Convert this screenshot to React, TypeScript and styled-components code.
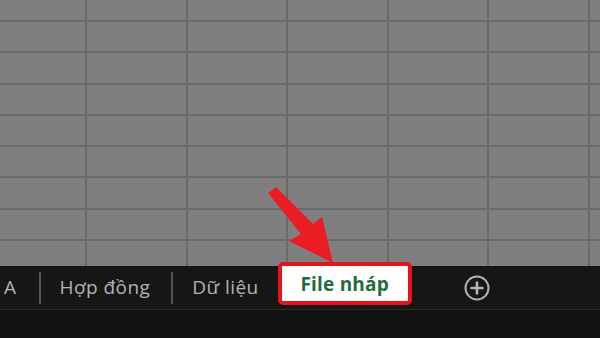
import styled, { createGlobalStyle } from "styled-components";

const GlobalStyle = createGlobalStyle`
  html, body {
    margin: 0;
    padding: 0;
    background: #121212;
  }
  body {
    font-family: "Open Sans", "Noto Sans", sans-serif;
  }
`;

const COLS = 7;
const ROWS = 9;

export default function App() {
  const cells = Array.from({ length: COLS * ROWS });
  return (
    <>
      <GlobalStyle />
      <Screen>
        <Sheet>
          {cells.map((_, i) => (
            <Cell key={i} />
          ))}
        </Sheet>

        <TabBar>
          <Tab $left={4} $right={23}>A</Tab>
          <Divider />
          <Tab $left={18} $right={21}>Hợp đồng</Tab>
          <Divider />
          <Tab $left={19} $right={19}>Dữ liệu</Tab>
          <ActiveTab>File nháp</ActiveTab>
          <AddButton aria-label="Thêm trang tính">
            <svg width="26" height="26" viewBox="0 0 26 26">
              <circle cx="13" cy="13" r="11.5" fill="none" stroke="#b3b3b3" strokeWidth="2" />
              <path d="M13 7.5v11M7.5 13h11" stroke="#b3b3b3" strokeWidth="2.6" strokeLinecap="round" />
            </svg>
          </AddButton>
        </TabBar>
        <StatusStrip />

        <Arrow width="80" height="90" viewBox="0 0 80 90">
          <polygon
            points="5,16 13,10 50,47 59,40 70,86 26,64 38,57"
            fill="#ec1c24"
          />
        </Arrow>
      </Screen>
    </>
  );
}

const Screen = styled.div`
  position: relative;
  width: 600px;
  height: 338px;
  overflow: hidden;
  background: #121212;
`;

const Sheet = styled.div`
  display: grid;
  grid-template-columns: 87px repeat(6, 100.5px);
  grid-template-rows: 22px repeat(8, 31.3px);
  height: 266px;
  overflow: hidden;
  background: #7f7f7f;
`;

const Cell = styled.div`
  border-right: 2px solid #6a6a6a;
  border-bottom: 2px solid #6a6a6a;
`;

const TabBar = styled.div`
  display: flex;
  align-items: center;
  height: 43px;
  background: #161616;
  border-bottom: 1px solid #2a2a2a;
`;

const Tab = styled.div<{ $left: number; $right: number }>`
  padding: 0 ${(p) => p.$right}px 0 ${(p) => p.$left}px;
  font-size: 19px;
  font-weight: 500;
  letter-spacing: 0.45px;
  color: #b3b3b3;
  line-height: 43px;
  white-space: nowrap;
`;

const Divider = styled.div`
  width: 2px;
  height: 32px;
  background: #555;
`;

const ActiveTab = styled.div`
  box-sizing: border-box;
  margin-top: -8px;
  width: 134px;
  height: 43px;
  display: flex;
  align-items: center;
  justify-content: center;
  background: #fff;
  border: 4px solid #e8141c;
  border-radius: 5px;
  font-size: 19px;
  font-weight: 700;
  letter-spacing: 0.2px;
  color: #1f6d3a;
  white-space: nowrap;
`;

const AddButton = styled.div`
  display: flex;
  margin-left: 52px;
`;

const StatusStrip = styled.div`
  height: 28px;
  background: #121212;
`;

const Arrow = styled.svg`
  position: absolute;
  left: 263px;
  top: 177px;
`;
